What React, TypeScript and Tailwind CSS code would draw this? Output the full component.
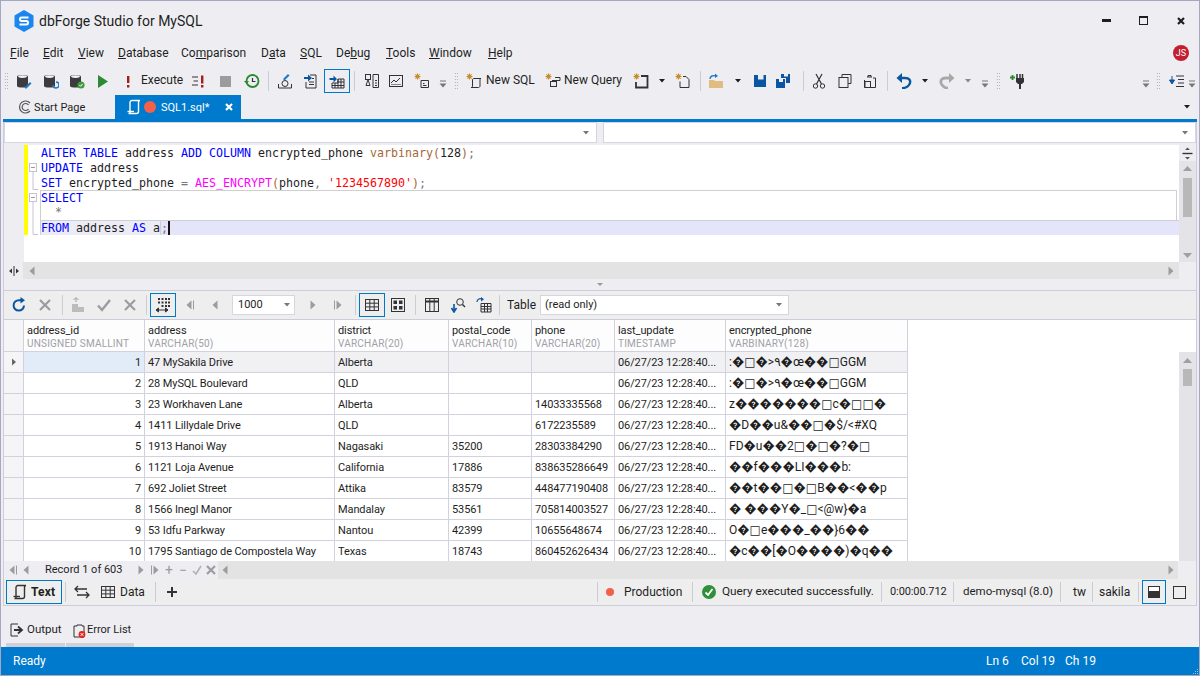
import React from "react";

const I = ({ c = "", children, w = 16, h = 16 }: { c?: string; children: React.ReactNode; w?: number; h?: number }) => (
  <svg width={w} height={h} viewBox={`0 0 ${w} ${h}`} fill="none" className={`block shrink-0 ${c}`}>{children}</svg>
);
const D = "#333337";
const B = "#0b56a0";
const Sep = ({ c = "" }: { c?: string }) => <div className={`w-px h-[20px] bg-[#ccccd8] shrink-0 ${c}`} />;
const Grip = ({ c = "" }: { c?: string }) => (
  <div className={`w-[4px] h-[18px] shrink-0 bg-[radial-gradient(#a0a0a0_0.7px,transparent_0.8px)] bg-[length:2.5px_3px] ${c}`} />
);
const Caret = ({ c = "", color = "#1e1e1e" }: { c?: string; color?: string }) => (
  <I w={8} h={8} c={c}><path d="M1 2h6L4 5.5z" fill={color} /></I>
);
const Chev = ({ c = "" }: { c?: string }) => (
  <I w={8} h={12} c={`mt-[6px] ${c}`}><path d="M1 3h6" stroke="#777" /><path d="M0.5 5.5h7L4 9.5z" fill="#777" /></I>
);
const Db = ({ c = "", o }: { c?: string; o: React.ReactNode }) => (
  <I c={c}>
    <path d="M1 3.5C1 1.5 12 1.5 12 3.5V13C12 15 1 15 1 13Z" fill="#3c3c40" />
    <ellipse cx="6.5" cy="3.6" rx="4.4" ry="1.4" fill="#f4f4f4" />
    {o}
  </I>
);
const Star = ({ x = 0, y = 0 }: { x?: number; y?: number }) => (
  <g transform={`translate(${x} ${y})`} stroke="#c98a2b" strokeWidth="1.1">
    <path d="M3.5 0.5v6M0.5 3.5h6M1.4 1.4l4.2 4.2M5.6 1.4L1.4 5.6" />
  </g>
);
const DocScroll = ({ color = D, c = "" }: { color?: string; c?: string }) => (
  <I c={c}>
    <path d="M4 13.5V3.5C4 2 5 1.5 6 1.5H14C13 1.5 12.5 2.2 12.5 3.5V12.5C12.5 14 11.5 14.5 10.5 14.5H2.5C3.5 14.5 4 14.2 4 13.5Z" stroke={color} strokeWidth="1.4" />
    <path d="M1.5 12.5H8" stroke={color} strokeWidth="1.4" />
  </I>
);
const GridIcon = ({ c = "", color = D }: { c?: string; color?: string }) => (
  <I c={c}>
    <rect x="1.5" y="2.5" width="13" height="11" stroke={color} />
    <path d="M1.5 6.2h13M1.5 9.9h13M5.8 2.5v11M10.2 2.5v11" stroke={color} />
  </I>
);
const X = ({ c = "", color = "#9b9ba1", s = 14 }: { c?: string; color?: string; s?: number }) => (
  <I w={s} h={s} c={c}><path d={`M2 2L${s - 2} ${s - 2}M${s - 2} 2L2 ${s - 2}`} stroke={color} strokeWidth="2.2" /></I>
);
const Arrow = ({ dir, c = "", color = "#9b9ba1", bar = false }: { dir: "l" | "r"; c?: string; color?: string; bar?: boolean }) => (
  <I w={10} h={12} c={c}>
    {dir === "l" ? <path d="M7.5 1.5v9L2.5 6z" fill={color} /> : <path d="M2.5 1.5v9L7.5 6z" fill={color} />}
    {bar && (dir === "l" ? <path d="M9.5 1.5v9" stroke={color} /> : <path d="M0.5 1.5v9" stroke={color} />)}
  </I>
);

function U({ a = "", u, b = "" }: { a?: string; u: string; b?: string }) {
  return <span className="whitespace-nowrap">{a}<u>{u}</u>{b}</span>;
}

const columns = [
  ["address_id", "UNSIGNED SMALLINT"],
  ["address", "VARCHAR(50)"],
  ["district", "VARCHAR(20)"],
  ["postal_code", "VARCHAR(10)"],
  ["phone", "VARCHAR(20)"],
  ["last_update", "TIMESTAMP"],
  ["encrypted_phone", "VARBINARY(128)"],
];
const TS = "06/27/23 12:28:40...";
const rows = [
  ["1", "47 MySakila Drive", "Alberta", "", "", TS, ":�□�>٩�œ��□GGM"],
  ["2", "28 MySQL Boulevard", "QLD", "", "", TS, ":�□�>٩�œ��□GGM"],
  ["3", "23 Workhaven Lane", "Alberta", "", "14033335568", TS, "z�������□c�□□�"],
  ["4", "1411 Lillydale Drive", "QLD", "", "6172235589", TS, "�D��u&��□�$/<#XQ"],
  ["5", "1913 Hanoi Way", "Nagasaki", "35200", "28303384290", TS, "FD�u��2□�□�?�□"],
  ["6", "1121 Loja Avenue", "California", "17886", "838635286649", TS, "��f���LI���b:"],
  ["7", "692 Joliet Street", "Attika", "83579", "448477190408", TS, "��t��□�□B��<��p"],
  ["8", "1566 Inegl Manor", "Mandalay", "53561", "705814003527", TS, "� ���Y�_□<@w}�a"],
  ["9", "53 Idfu Parkway", "Nantou", "42399", "10655648674", TS, "O�□e���_��}6��"],
  ["10", "1795 Santiago de Compostela Way", "Texas", "18743", "860452626434", TS, "�c��[�O����)�q��"],
];
const gridCols = "grid grid-cols-[19px_121px_190px_114px_83px_83px_111px_183px]";

const Fold = ({ k }: { k: "box" | "line" | "end" | "none" }) => (
  <I w={12} h={15} c="shrink-0">
    {k === "box" && <><rect x="1.5" y="3.5" width="7" height="8" fill="#fff" stroke="#c4c4d0" /><path d="M3 7.5h4" stroke="#999" /><path d="M5 11.5V15" stroke="#c4c4d0" /></>}
    {k === "line" && <path d="M5 0V15" stroke="#c4c4d0" />}
    {k === "end" && <path d="M5 0V14.5H10" stroke="#c4c4d0" />}
  </I>
);
const Yellow = () => <div className="w-[4px] h-[15px] bg-[#ffff00] shrink-0" />;

export default function App() {
  return (
    <div className="w-[1200px] h-[676px] flex flex-col overflow-hidden bg-[#eeeef2] border border-[#a6a7c2] text-[12px] text-[#1e1e1e] [font-family:Roboto,'DejaVu_Sans',sans-serif]">
      {/* Title */}
      <div className="h-[39px] flex items-center pl-[13px] shrink-0">
        <svg width="20" height="22" viewBox="0 0 20 22" className="block shrink-0">
          <path d="M10 0L19.5 5.5V16.5L10 22L0.5 16.5V5.5Z" fill="#1a86ee" />
          <path d="M14.5 7.5H7.5C5.5 7.5 5.5 11 7.5 11H12.5C14.5 11 14.5 14.5 12.5 14.5H5.5" stroke="#fff" strokeWidth="2" fill="none" />
        </svg>
        <span className="ml-[5px] text-[14px] leading-none whitespace-nowrap">dbForge Studio for MySQL</span>
        <div className="ml-auto flex items-center pr-[13px]">
          <div className="w-[9px] h-[3px] bg-[#1e1e1e]" />
          <div className="ml-[28px] w-[9px] h-[9px] border border-[#1e1e1e] border-t-2" />
          <X c="ml-[28px]" color="#1e1e1e" s={10} />
        </div>
      </div>
      {/* Menu */}
      <div className="h-[26px] flex items-center shrink-0 relative pl-[9px]">
        <div className="w-[33px]"><U u="F" b="ile" /></div>
        <div className="w-[35px]"><U u="E" b="dit" /></div>
        <div className="w-[40px]"><U u="V" b="iew" /></div>
        <div className="w-[63px]"><U u="D" b="atabase" /></div>
        <div className="w-[80px]"><U a="Co" u="m" b="parison" /></div>
        <div className="w-[39px]"><U a="D" u="a" b="ta" /></div>
        <div className="w-[36px]"><U u="S" b="QL" /></div>
        <div className="w-[50px]"><U a="De" u="b" b="ug" /></div>
        <div className="w-[43px]"><U u="T" b="ools" /></div>
        <div className="w-[59px]"><U u="W" b="indow" /></div>
        <div><U u="H" b="elp" /></div>
        <div className="ml-auto mr-[10px] w-[16px] h-[16px] rounded-full bg-[#c21f32] text-white text-[9px] leading-none flex items-center justify-center">JS</div>
      </div>
      {/* Toolbar */}
      <div className="h-[29px] flex items-center shrink-0">
        <Grip c="ml-[3px]" />
        <Db c="ml-[8px]" o={<path d="M9 14l5-5 1.5 1.5-5 5H9z" fill="#1e78c8" />} />
        <Db c="ml-[11px]" o={<path d="M10 12a3 3 0 1 0 3-3" stroke="#1e78c8" strokeWidth="1.5" />} />
        <Db c="ml-[10px]" o={<><circle cx="12" cy="12" r="3.6" fill="#3d9a3d" /><path d="M10.3 12l1.3 1.3 2-2.4" stroke="#fff" /></>} />
        <I c="ml-[10px]"><path d="M3 2l10 6.5L3 15z" fill="#2d8a34" /></I>
        <I c="ml-[9px]"><path d="M7 3h2.4v7H7zM7 12h2.4v2.4H7z" fill="#a41d1d" /></I>
        <span className="ml-[5px] w-[41px] whitespace-nowrap -mt-[2px]">Execute</span>
        <I c="ml-[9px]"><path d="M1 4h6M2.5 8h4.5M1 12h6" stroke={D} /><path d="M10 2.5h2.4v8H10zM10 12h2.4v2.4H10z" fill="#a41d1d" /></I>
        <I c="ml-[11px]"><rect x="2" y="3" width="11" height="11" fill="#9c9c9c" /></I>
        <I c="ml-[10px]">
          <circle cx="8.5" cy="8" r="6" stroke="#2d8a34" strokeWidth="1.8" />
          <path d="M0 8h5L2.5 11z" fill="#2d8a34" />
          <path d="M8.5 5v3.5h3" stroke={D} strokeWidth="1.2" />
        </I>
        <Sep c="ml-[8px]" />
        <I c="ml-[8px]">
          <path d="M1.5 11v4h13v-4" stroke={D} />
          <circle cx="8" cy="10.5" r="3" stroke={D} />
          <path d="M6 6l5-5 1.5 1.5-5 5z" fill="#1e78c8" />
        </I>
        <I c="ml-[10px]">
          <path d="M7 2h6v13H3V9" stroke={D} />
          <path d="M6 9h5M6 11.5h5M9 5.5h2" stroke={D} />
          <path d="M1 4h4V1.5L9 5 5 8.5V6H1z" fill={B} />
        </I>
        <div className="ml-[5px] w-[26px] h-[24px] border border-[#0078c8] flex items-center justify-center shrink-0">
          <I>
            <path d="M0.5 5h4V2.5L8 6 4.5 9.5V7h-4z" fill={B} />
            <path d="M9 6h6v9H3v-5h6zM9 6v9M6 10v5M3 12.5h12M12 6v9M9 9h6" stroke={D} />
          </I>
        </div>
        <Sep c="ml-[4px]" />
        <I c="ml-[9px]">
          <rect x="1.5" y="1.5" width="5" height="5" stroke={D} /><path d="M4 6.5L2 12.5h4z" stroke={D} />
          <path d="M9 5.5V1.5h5.5v13H9z" stroke={D} /><path d="M11 7.5h2M11 10h2M11 12.5h2" stroke={D} />
        </I>
        <I c="ml-[8px]"><rect x="1.5" y="2.5" width="13" height="11" stroke={D} /><path d="M3 10l3-3 2 2 4-4" stroke={D} /><path d="M3 11.5h10" stroke="#888" /></I>
        <I c="ml-[10px]"><Star x={0} y={0} /><path d="M7 7.5h7.5v7H7z" stroke={D} /><path d="M9 12.5h3.5M9 10.5h1.5" stroke={D} /></I>
        <Chev c="ml-[9px]" />
        <Grip c="ml-[7px]" />
        <I c="ml-[8px]"><Star /><path d="M6.5 7c0-1.5 1-1.5 1.5-1.5h7c-.8 0-1 .8-1 1.5v6c0 1-1 1.5-1.5 1.5H5c1 0 1.5-.5 1.5-1.5z" stroke={D} /></I>
        <span className="ml-[4px] w-[48px] whitespace-nowrap -mt-[2px]">New SQL</span>
        <I c="ml-[11px]"><Star /><path d="M7 7.5h8v-3H10" stroke={D} /><rect x="5.5" y="8.5" width="6" height="5" stroke={D} /></I>
        <span className="ml-[3px] w-[59px] whitespace-nowrap -mt-[2px]">New Query</span>
        <I c="ml-[10px]"><Star /><path d="M8 3h6.5v11.5H3V9" stroke={D} strokeWidth="1.8" /></I>
        <Caret c="ml-[9px]" />
        <I c="ml-[9px]"><Star /><path d="M8 3.5h3l3 3v8H5v-6" stroke={D} /></I>
        <Sep c="ml-[9px]" />
        <I c="ml-[7px]">
          <path d="M1 7h5l1 1h8v7H1z" fill="#e0bc80" />
          <path d="M2 6c0-3 3-4 6-3" stroke="#1e78c8" strokeWidth="1.4" />
          <path d="M7 0.5L10 3 7 5z" fill="#1e78c8" />
        </I>
        <Caret c="ml-[10px]" />
        <I c="ml-[10px]"><path d="M2 2h12v12H2z" fill={B} /><rect x="6" y="2" width="5.5" height="4.5" fill="#eeeef2" /></I>
        <I c="ml-[7px]"><path d="M1 6h9v9H1z" fill={B} /><rect x="4" y="6" width="4" height="3" fill="#eeeef2" /><path d="M6 1h9v9h-4V5H6z" fill={B} /><rect x="9" y="1" width="4" height="2.5" fill="#eeeef2" /></I>
        <Sep c="ml-[12px]" />
        <I c="ml-[7px]">
          <circle cx="4.5" cy="13" r="2.2" stroke={D} /><circle cx="11.5" cy="13" r="2.2" stroke={D} />
          <path d="M5.5 11L11 1M10.5 11L5 1" stroke={D} strokeWidth="1.2" />
        </I>
        <I c="ml-[10px]"><path d="M5 4V1.5h9v9h-3" stroke={D} /><rect x="2" y="4.5" width="9" height="10" stroke={D} /></I>
        <I c="ml-[9px]"><path d="M6 4V2.5h3V4M5 4h5M11 5h2.5v9.5h-11V7" stroke={D} /><rect x="3" y="8.5" width="5.5" height="6" stroke={D} /></I>
        <Sep c="ml-[9px]" />
        <I c="ml-[8px]">
          <path d="M4 5h5c5 0 5.5 3 5 5s-3 5-8 5.2" stroke={B} strokeWidth="2.4" />
          <path d="M0.5 5L6 0v10z" fill={B} />
        </I>
        <Caret c="ml-[9px]" />
        <I c="ml-[10px]">
          <path d="M12 5H7C2 5 1.5 8 2 10s3 5 7 5.2" stroke="#a8a8a8" strokeWidth="2.8" />
          <path d="M15.5 5L10 0v10z" fill="#a8a8a8" />
        </I>
        <Caret c="ml-[9px]" color="#888" />
        <Chev c="ml-[9px]" />
        <Grip c="ml-[7px]" />
        <I c="ml-[9px]">
          <path d="M1 4.5h5M3.5 2v5" stroke="#2d8a34" strokeWidth="1.8" />
          <path d="M8 1v4M11 1v4M13.5 1v4" stroke={D} strokeWidth="1.5" /><path d="M7 5h8v4l-2 2H9L7 9z" fill={D} /><path d="M10 11h2v5h-2z" fill={D} />
        </I>
        <Chev c="ml-[117px]" />
        <Grip c="ml-[6px]" />
        <I c="ml-[9px]"><path d="M7 3h8M9 6.5h6M9 10h6M7 13.5h8" stroke={D} strokeWidth="1.2" /><path d="M3 3v5M0.5 7h5L3 11z" fill={B} stroke={B} /></I>
        <Chev c="ml-[3px]" />
      </div>
      {/* Tabs */}
      <div className="h-[24px] flex items-center shrink-0 pl-[16px] relative">
        <I c="">
          <path d="M13 4A6 6 0 1 0 13 12" stroke="#555" strokeWidth="1.2" />
          <path d="M11.5 6A3.5 3.5 0 1 0 11.5 10" stroke="#555" strokeWidth="1.2" />
        </I>
        <span className="ml-[1px] w-[52px] whitespace-nowrap text-[11px] pt-[2px]">Start Page</span>
        <div className="ml-[29px] w-[126px] h-[24px] bg-[#007acc] text-white flex items-center pl-[11px]">
          <DocScroll color="#fff" />
          <div className="ml-[2px] w-[12px] h-[12px] rounded-full bg-[#f4604a]" />
          <span className="ml-[5px] w-[50px] whitespace-nowrap text-[11px] pt-[2px]">SQL1.sql*</span>
          <X c="ml-[13px]" color="#fff" s={10} />
        </div>
        <Caret c="ml-auto mr-[8px]" />
      </div>
      <div className="h-[3px] bg-[#007acc] mx-[2px] shrink-0" />
      {/* Main panel */}
      <div className="mx-[2px] border-x border-[#ccccdb] flex flex-col shrink-0">
        <div className="h-[23px] flex gap-[6px] pb-[2px]">
          <div className="w-[593px] bg-white border border-[#d6d6e0] flex items-center justify-end pr-[6px]"><Caret color="#777" /></div>
          <div className="flex-1 bg-white border border-[#d6d6e0] flex items-center justify-end pr-[6px]"><Caret color="#777" /></div>
        </div>
        {/* Editor */}
        <div className="h-[117px] flex">
          <div className="w-[20px] shrink-0" />
          <div className="flex-1 bg-white flex flex-col text-[11.63px] leading-[15px] whitespace-pre [font-family:'DejaVu_Sans_Mono',monospace]">
            <div className="flex h-[15px]"><Yellow /><Fold k="none" /><div className="pl-px pt-px">
              <span className="text-[#0000ff]">ALTER TABLE</span> address <span className="text-[#0000ff]">ADD COLUMN</span> encrypted_phone <span className="text-[#a5683a]">varbinary(</span>128<span className="text-[#a5683a]">)</span><span className="text-[#777]">;</span>
            </div></div>
            <div className="flex h-[15px]"><Yellow /><Fold k="box" /><div className="pl-px pt-px">
              <span className="text-[#0000ff]">UPDATE</span> address
            </div></div>
            <div className="flex h-[15px]"><Yellow /><Fold k="end" /><div className="pl-px pt-px">
              <span className="text-[#0000ff]">SET</span> encrypted_phone <span className="text-[#777]">=</span> <span className="text-[#ff00ff]">AES_ENCRYPT</span><span className="text-[#a5683a]">(</span>phone<span className="text-[#777]">,</span> <span className="text-[#ff0000]">'1234567890'</span><span className="text-[#a5683a]">)</span><span className="text-[#777]">;</span>
            </div></div>
            <div className="flex h-[15px]"><Yellow /><Fold k="box" /><div className="flex-1 mr-[2px] border-x border-t border-[#cfcfcf]">
              <span className="text-[#0000ff]">SELECT</span>
            </div></div>
            <div className="flex h-[15px]"><Yellow /><Fold k="line" /><div className="flex-1 mr-[2px] border-x border-[#cfcfcf] text-[#777]">
              {"  *"}
            </div></div>
            <div className="flex h-[15px]"><Yellow /><Fold k="end" /><div className="flex-1 flex bg-[#e4e4fa] border-t border-[#cfcfcf] leading-[14px]">
              <span className="bg-[#ececf6] border-x border-[#cfcfcf]"><span className="text-[#0000ff]">FROM</span> address <span className="text-[#0000ff]">AS</span> a</span><span className="text-[#777]">;</span><span className="w-[2px] h-full bg-[#1e1010]" />
            </div></div>
          </div>
          <div className="w-[17px] shrink-0 flex flex-col bg-[#e3e3e8]">
            <div className="h-[16px] bg-[#eeeef2] flex items-center justify-center">
              <I w={11} h={13}><path d="M5.5 0.5L8 3H3zM5.5 12.5L8 10H3z" fill="#555" /><path d="M0.5 6.5h10" stroke="#333" strokeWidth="1.4" /></I>
            </div>
            <div className="flex-1 flex flex-col items-center pt-[4px]">
              <I w={11} h={7}><path d="M5.5 1L10 6H1z" fill="#a0a0a0" /></I>
              <div className="mt-[6px] w-[9px] h-[39px] bg-[#b8b8b8]" />
              <I w={11} h={7} c="mt-auto mb-[3px]"><path d="M1 1h9L5.5 6z" fill="#a0a0a0" /></I>
            </div>
          </div>
        </div>
        {/* Editor hscroll */}
        <div className="h-[17px] flex">
          <div className="w-[20px] bg-[#eeeef2] flex items-center justify-center border-r border-[#e3e3e3]">
            <I w={12} h={12}><path d="M6 1v10" stroke="#333" /><path d="M4 3.5v5L1 6zM8 3.5v5L11 6z" fill="#333" /></I>
          </div>
          <div className="w-[1155px] bg-[#e3e3e3] flex items-center justify-between px-[3px]">
            <Arrow dir="l" />
            <Arrow dir="r" />
          </div>
        </div>
        <div className="h-[11px] flex items-center justify-center">
          <I w={8} h={5}><path d="M1 1h6L4 4z" fill="#9a9a9a" /></I>
        </div>
        {/* Grid toolbar */}
        <div className="h-[30px] bg-[#eeeeee] border-y border-[#ccccdb] flex items-center">
          <I c="ml-[7px]">
            <path d="M13 8.5A5.2 5.2 0 1 1 8 3.2h3" stroke={B} strokeWidth="2" />
            <path d="M9.5 0L14 3.2 9.5 6.5z" fill={B} />
          </I>
          <X c="ml-[11px]" s={14} />
          <Sep c="ml-[10px]" />
          <I c="ml-[7px]">
            <path d="M2 7l6 0v8H2zM8 10h6v5H8z" fill="#bcbcbc" />
            <path d="M6 5V1M3.5 3L6 0.5 8.5 3" stroke="#a0a0a0" />
          </I>
          <I c="ml-[10px]"><path d="M2 8.5L6 13 14 3" stroke="#9b9ba1" strokeWidth="2.4" /></I>
          <X c="ml-[11px]" s={14} />
          <Sep c="ml-[9px]" />
          <div className="ml-[3px] w-[26px] h-[24px] border border-[#0078c8] flex items-center justify-center">
            <I>
              <path d="M3 1h2v2H3zM6.5 1h2v2h-2zM10 1h2v2h-2zM13 1h2v2h-2zM3 4.5h2v2H3zM6.5 4.5h2v2h-2zM10 4.5h2v2h-2zM13 4.5h2v2h-2zM6.5 8h2v2h-2zM10 8h2v2h-2zM13 8h2v2h-2z" fill={D} />
              <path d="M1.5 13h11M1 13l2.5-2v4zM13 13l-2.5-2v4z" stroke={D} fill={D} />
            </I>
          </div>
          <Arrow dir="l" bar c="ml-[8px]" />
          <Arrow dir="l" c="ml-[16px]" />
          <div className="ml-[12px] w-[63px] h-[20px] bg-white border border-[#d6d6e0] flex items-center pl-[5px] pr-[3px] justify-between text-[11px]">
            <span>1000</span><Caret color="#777" />
          </div>
          <Arrow dir="r" c="ml-[13px]" />
          <Arrow dir="r" bar c="ml-[16px]" />
          <Sep c="ml-[11px]" />
          <div className="ml-[3px] w-[26px] h-[24px] border border-[#0078c8] flex items-center justify-center"><GridIcon /></div>
          <I c="ml-[5px]"><rect x="1.5" y="1.5" width="13" height="13" stroke={D} /><path d="M3.5 3.5h3.5v3.5H3.5zM9 3.5h3.5v3.5H9zM3.5 9h3.5v3.5H3.5zM9 9h3.5v3.5H9z" fill={D} /></I>
          <Sep c="ml-[9px]" />
          <I c="ml-[8px]"><rect x="1.5" y="1.5" width="13" height="13" stroke={D} /><path d="M1.5 4.5h13" stroke={D} strokeWidth="2" /><path d="M5.8 1.5v13M10.2 1.5v13" stroke={D} /></I>
          <I c="ml-[10px]"><circle cx="10" cy="5" r="3.3" stroke={D} /><path d="M12.5 7.5L15 10" stroke={D} strokeWidth="1.4" /><path d="M4 7v6M1.5 11L4 15l2.5-4" stroke={B} strokeWidth="1.6" /></I>
          <I c="ml-[10px]"><path d="M1 5c0-3 3-4 5-3" stroke={B} strokeWidth="1.2" /><path d="M5 0l3 2.2L5 4.5z" fill={B} /><path d="M5 6.5h10v8.5H5zM5 9.5h10M5 12h10M8.5 6.5V15M11.5 6.5V15" stroke={D} /></I>
          <Sep c="ml-[7px]" />
          <span className="ml-[7px] w-[28px] whitespace-nowrap">Table</span>
          <div className="ml-[5px] w-[249px] h-[20px] bg-white border border-[#d6d6e0] flex items-center pl-[4px] pr-[5px] justify-between text-[11px]">
            <span>(read only)</span><Caret color="#777" />
          </div>
        </div>
        {/* Grid */}
        <div className="h-[241px] flex overflow-hidden">
          <div className="flex-1 bg-white overflow-hidden">
            <div className={`${gridCols} h-[32px] w-[904px]`}>
              <div className="bg-[#f5f5f7] border-b border-[#d2d2de]" />
              {columns.map(([n, t]) => (
                <div key={n} className="border-l border-b border-[#d2d2de] bg-[#fdfdfd] pl-[3px] pt-[4px] flex flex-col leading-[13px] last:border-r whitespace-nowrap">
                  <span className="text-[11px] tracking-[-0.1px]">{n}</span>
                  <span className="text-[10px] text-[#a0a0a8] tracking-[0.2px]">{t}</span>
                </div>
              ))}
            </div>
            {rows.map((r, i) => (
              <div key={r[0]} className={`${gridCols} h-[21px] w-[904px]`}>
                <div className="bg-[#f5f5f7] border-b border-[#d2d2de] flex items-center pl-[7px]">
                  {i === 0 && <I w={6} h={8}><path d="M1 0.5L5 4 1 7.5z" fill="#666" /></I>}
                </div>
                {r.map((v, j) => (
                  <div key={j} className={`border-l border-b border-[#d2d2de] px-[3px] flex items-center whitespace-nowrap overflow-hidden last:border-r ${j === 6 ? "text-[12px]" : "text-[11px] tracking-[-0.1px] pt-[3px]"} ${j === 0 ? "justify-end" : ""} ${i === 0 ? (j === 0 ? "bg-[#e1ecf8]" : "bg-[#f1f1f4]") : "bg-white"}`}>{v}</div>
                ))}
              </div>
            ))}
          </div>
          <div className="w-[17px] shrink-0 bg-[#e3e3e8] flex flex-col items-center">
            <div className="h-[32px] w-full bg-white" />
            <I w={11} h={7} c="mt-[5px]"><path d="M5.5 1L10 6H1z" fill="#a0a0a0" /></I>
            <div className="mt-[5px] w-[9px] h-[17px] bg-[#b8b8b8]" />
          </div>
        </div>
        {/* Record bar */}
        <div className="h-[18px] flex items-center">
          <div className="w-[214px] flex items-center shrink-0 text-[#9b9ba1]">
            <Arrow dir="l" bar c="ml-[3px]" />
            <Arrow dir="l" c="ml-[4px]" />
            <span className="ml-[14px] w-[78px] text-[#1e1e1e] whitespace-nowrap text-[11px]">Record 1 of 603</span>
            <Arrow dir="r" c="ml-[13px]" />
            <Arrow dir="r" bar c="ml-[5px]" />
            <span className="ml-[1px] w-[14px] text-center text-[14px] leading-none">+</span>
            <span className="w-[14px] text-center text-[14px] leading-none">−</span>
            <I w={12} h={12} c="ml-[1px]"><path d="M2 7l3 3 5-8" stroke="#b0b0b6" strokeWidth="1.6" /></I>
            <X c="ml-[2px]" s={12} />
          </div>
          <div className="flex-1 h-full bg-[#e3e3e3] flex items-center justify-between px-[2px] mr-[18px]">
            <Arrow dir="l" />
            <Arrow dir="r" />
          </div>
        </div>
        {/* Bottom bar */}
        <div className="h-[27px] flex items-center border-b border-[#ccccdb] bg-[#eeeeee]">
          <div className="ml-[2px] w-[56px] h-[24px] border border-[#0078c8] flex items-center pl-[5px] gap-[3px]">
            <DocScroll />
            <span className="font-bold tracking-[0.2px]">Text</span>
          </div>
          <Sep c="ml-[3px]" />
          <I c="ml-[8px]"><path d="M1 5h12M4 2L1 5l3 3M15 11H3M12 8l3 3-3 3" stroke={D} strokeWidth="1.3" /></I>
          <GridIcon c="ml-[10px]" />
          <span className="ml-[4px] w-[26px]">Data</span>
          <Sep c="ml-[9px]" />
          <I c="ml-[8px]"><path d="M8 3v10M3 8h10" stroke={D} strokeWidth="2" /></I>
          <Sep c="ml-[417px]" />
          <div className="ml-[8px] w-[8px] h-[8px] rounded-full bg-[#f4604a]" />
          <span className="ml-[10px] w-[61px] whitespace-nowrap">Production</span>
          <Sep c="ml-[7px]" />
          <I c="ml-[8px]"><circle cx="8" cy="8" r="7" fill="#2f8f3a" /><path d="M4.5 8.5L7 11l4.5-6" stroke="#fff" strokeWidth="1.8" /></I>
          <span className="ml-[5px] w-[152px] whitespace-nowrap text-[11.8px]">Query executed successfully.</span>
          <Sep c="ml-[7px]" />
          <span className="ml-[8px] w-[56px] whitespace-nowrap text-[11px] tracking-[-0.1px]">0:00:00.712</span>
          <Sep c="ml-[7px]" />
          <span className="ml-[9px] w-[90px] whitespace-nowrap text-[11.5px]">demo-mysql (8.0)</span>
          <Sep c="ml-[7px]" />
          <span className="ml-[12px] w-[12px]">tw</span>
          <Sep c="ml-[7px]" />
          <span className="ml-[6px] w-[32px]">sakila</span>
          <Sep c="ml-[7px]" />
          <div className="ml-[3px] w-[24px] h-[24px] border border-[#0078c8] flex items-center justify-center">
            <div className="w-[12px] h-[12px] border border-[#333] bg-[linear-gradient(#fff_0_45%,#333_45%)]" />
          </div>
          <div className="ml-[7px] w-[13px] h-[13px] border border-[#333]" />
        </div>
      </div>
      {/* Output */}
      <div className="h-[41px] flex flex-col justify-end shrink-0">
        <div className="h-[20px] flex items-center pl-[8px]">
          <I><path d="M9 2H2v12h7" stroke={D} /><path d="M5 8h7M9 4.5L13 8l-4 3.5" stroke={D} strokeWidth="1.8" /></I>
          <span className="ml-[2px] w-[44px] text-[11.5px]">Output</span>
          <I><path d="M6 3h5v1h2v11H3V4h3z" stroke={D} /><circle cx="11" cy="12.5" r="3.4" fill="#e0281e" /><path d="M9.7 11.2l2.6 2.6M12.3 11.2l-2.6 2.6" stroke="#fff" /></I>
          <span className="whitespace-nowrap text-[11px]">Error List</span>
        </div>
        <div className="h-[4px] flex pl-[5px] gap-px mt-[3px]">
          <div className="w-[59px] bg-[#cfcfda]" />
          <div className="w-[68px] bg-[#cfcfda]" />
        </div>
      </div>
      {/* Status */}
      <div className="flex-1 bg-[#007acc] text-white flex items-center pl-[12px] relative">
        <span>Ready</span>
        <span className="ml-auto w-[35px]">Ln 6</span>
        <span className="w-[44px]">Col 19</span>
        <span className="w-[40px] mr-[94px]">Ch 19</span>
        <I w={7} h={7} c="absolute right-0 bottom-0"><path d="M5 1h1v1H5zM3 3h1v1H3zM5 3h1v1H5zM1 5h1v1H1zM3 5h1v1H3zM5 5h1v1H5z" fill="#8fc4ea" /></I>
      </div>
    </div>
  );
}
